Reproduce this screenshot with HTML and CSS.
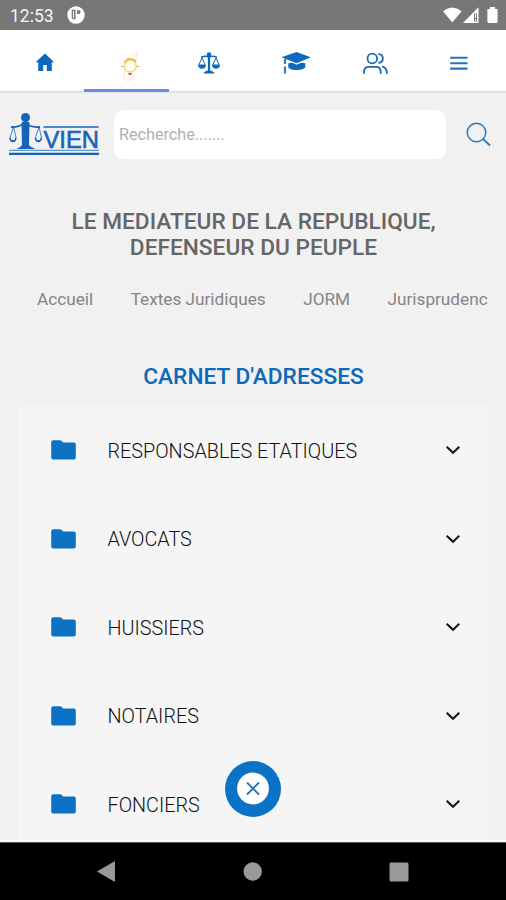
FILE: index.html
```html
<!DOCTYPE html>
<html lang="fr">
<head>
<meta charset="utf-8">
<meta name="viewport" content="width=device-width, initial-scale=1">
<title>Carnet d'adresses</title>
<link rel="stylesheet" href="styles.css">
</head>
<body>
<svg class="defs" width="0" height="0">
  <symbol id="folder" viewBox="0 0 25 20"><path d="M2.2.3h7.6L12.3 2.6h10.5q2 0 2 2v13q0 2-2 2H2.2q-2 0-2-2V2.3q0-2 2-2z" fill="#0b72c6"/></symbol>
  <symbol id="chevron" viewBox="0 0 16 10"><path d="M1.7 1.7 8 7.800l6.300-6.100" fill="none" stroke="#161616" stroke-width="2"/></symbol>
</svg>
<div class="screen">
  <header class="status">
    <span class="clock">12:53</span>
    <svg class="app-mark" width="18" height="18" viewBox="0 0 18 18"><circle cx="9" cy="9" r="8.700" fill="#fff"/><path d="M4.700 3.800h3.800v9.400H6.200Q4.700 13 4.700 11zM10 4.300h3.200q1.200 2.200-.8 3.800H10z" fill="#777"/><path d="M6.500 5.200v6.500" stroke="#fff" stroke-width="1"/></svg>
    <svg class="signals" width="56" height="18" viewBox="0 0 56 18">
      <path d="M0 5.200Q9.300-2.200 18.600 5.200L9.300 16.500z" fill="#fff"/>
      <path d="M35.500 1.200V17H20z" fill="#fff"/><path d="M31 7.500h3v8h-3z" fill="#777"/><path d="M32 8h1v4h-1zM32 13h1v2h-1z" fill="#fff"/>
      <path d="M47 1h5v2h2.600v12.500q0 1.500-1.500 1.500h-7.200q-1.500 0-1.500-1.500V3H47z" fill="#fff"/>
    </svg>
  </header>
  <nav class="tabs">
    <a class="tab"><svg viewBox="0 0 84 61"><path d="M45 23.500 54.300 32.300H51.800V41H46.800V35H43.200V41H38.200V32.300H35.500z" fill="#0b69be"/></svg></a>
    <a class="tab active"><svg viewBox="0 0 84 61">
      <circle cx="46.300" cy="36" r="6" fill="#fffdf0" stroke="#f5d983" stroke-width="1.500"/>
      <path d="M40.700 33q2-4.500 6-4 4 .2 5 3.500" fill="none" stroke="#edc04f" stroke-width="2.200"/>
      <path d="M37.300 36.500h2.300M52.500 36.500h2.600" stroke="#b8a56b" stroke-width="1"/>
      <path d="M44 43h4l-1 2h-2z" fill="#e34b28"/>
      <path d="M48.500 27q1-3 4.500-3.500l.8-1.500q-.5 5-2.500 8M41 41l-1.500 5.500 3 4 5-1 2.500-6" fill="none" stroke="#fbcabf" stroke-width="1" stroke-dasharray="2 1"/>
    </svg></a>
    <a class="tab"><svg viewBox="0 0 84 61"><g fill="none" stroke="#0b69be" stroke-width="1.500"><path d="M40 23v19" stroke-width="2.200"/><path d="M32 27.500q4-2 8-.5 4-1.500 8 .5"/><path d="m33 28-3.300 7h6.600zm14 0-3.300 7h6.600z" stroke-width="1"/></g><circle cx="40" cy="24.500" r="2.200" fill="#0b69be"/><path d="M29 35h8q-.5 3.800-4 3.800T29 35zm14 0h8q-.5 3.800-4 3.800T43 35zM34.500 43.500q.8-2.800 5.500-3.100 4.700.3 5.500 3.100z" fill="#0b69be"/></svg></a>
    <a class="tab"><svg viewBox="0 0 84 61"><path d="M28.400 27.200 43.500 22l14.300 5.200-14.300 6z" fill="#0b69be"/><path d="M35.200 33.500q3.500-1.700 8.300 1.200 5-2.800 8.800-1.500v4.300q-2.500 2.500-8.500 2.500t-8.500-2.600z" fill="#0b69be"/><path d="M32 29V34M32 36.500V43.500" stroke="#3d77b6" stroke-width="2.200"/></svg></a>
    <a class="tab"><svg viewBox="0 0 84 61"><g fill="none" stroke="#2266b2" stroke-width="1.800" stroke-linecap="round"><circle cx="35.300" cy="28.500" r="4.800"/><path d="M42 24.200q3.800.5 3.800 4.300T42 32.800M27.100 43v-1.500q0-4.700 4.700-4.700H39q4.700 0 4.700 4.700V43M45.600 36.600q4.300 1.200 4.300 6.400"/></g></svg></a>
    <a class="tab"><svg viewBox="0 0 84 61"><path d="M28.200 27.800h17.300M28.200 33.200h17.300M28.200 38.600h17.300" stroke="#2473bd" stroke-width="2.100"/></svg></a>
  </nav>
  <main class="content">
    <div class="search-row">
      <svg class="logo" width="91" height="44" viewBox="0 0 91 44">
        <g fill="none" stroke="#1764b7"><path d="M2 14Q8 15 15.500 10.200 24 15 31 14" stroke-width="1.800"/><path d="m4.500 14-3.400 10.500M4.500 14 7 24.500M30 14l-3.500 10.500M30 14l2.500 10.500" stroke-width=".8"/><path d="M34.500 14h55" stroke-width="1.500"/><path d="M0 37.400h90" stroke="#6496ca" stroke-width="1.400"/><path d="M0 40.900h90" stroke-width="2.200"/></g>
        <circle cx="16.500" cy="4.500" r="4.500" fill="#1764b7"/>
        <path d="M12.500 9.500q4-2.500 8 0l-.5 22.500q.5 1.500 6.500 4h-19q5-2.500 5.500-4zM.2 24.500h7.500q-.5 4.800-3.800 4.800T.2 24.500zm25.500 0h7.500q-.5 4.800-3.800 4.800T25.700 24.500z" fill="#1764b7"/>
        <path d="M1.700 24h4.500L5.600 27H2.300zm25.500 0h4.500l-.6 3h-3.300z" fill="#e7eff7"/>
        <text x="34.500" y="34.500" textLength="55.500" lengthAdjust="spacingAndGlyphs" class="logo-text">VIEN</text>
      </svg>
      <div class="search-box">Recherche.......</div>
      <svg class="search-icon" width="25" height="25" viewBox="0 0 25 25"><g fill="none" stroke="#287bbd" stroke-width="1.500"><circle cx="10.500" cy="10.500" r="9.300"/><path d="m17 17 7 6.500" stroke-width="1.800"/></g></svg>
    </div>
    <h1 class="headline">LE MEDIATEUR DE LA REPUBLIQUE,<br>DEFENSEUR DU PEUPLE</h1>
    <div class="links"><span>Accueil</span><span>Textes Juridiques</span><span>JORM</span><span>Jurisprudenc</span></div>
    <h2 class="section-title">CARNET D'ADRESSES</h2>
    <section class="list">
      <div class="row"><svg class="folder"><use href="#folder"/></svg><span>RESPONSABLES ETATIQUES</span><svg class="chevron"><use href="#chevron"/></svg></div>
      <div class="row"><svg class="folder"><use href="#folder"/></svg><span>AVOCATS</span><svg class="chevron"><use href="#chevron"/></svg></div>
      <div class="row"><svg class="folder"><use href="#folder"/></svg><span>HUISSIERS</span><svg class="chevron"><use href="#chevron"/></svg></div>
      <div class="row"><svg class="folder"><use href="#folder"/></svg><span>NOTAIRES</span><svg class="chevron"><use href="#chevron"/></svg></div>
      <div class="row"><svg class="folder"><use href="#folder"/></svg><span>FONCIERS</span><svg class="chevron"><use href="#chevron"/></svg></div>
    </section>
    <svg class="fab" viewBox="0 0 56 56"><circle cx="28" cy="28" r="28" fill="#0b72c6"/><circle cx="28" cy="27.500" r="15.900" fill="#fff"/><path d="m22 21.500 12 12m0-12-12 12" stroke="#2374b9" stroke-width="1.800"/></svg>
  </main>
  <footer class="navbar">
    <svg width="18" height="21" viewBox="0 0 18 21"><path d="M18 0v21L0 10.500z" fill="#999"/></svg>
    <svg width="20" height="19" viewBox="0 0 20 19"><circle cx="10.700" cy="9.500" r="9.200" fill="#999"/></svg>
    <svg width="20" height="20" viewBox="0 0 20 20"><rect x=".5" y=".5" width="19" height="19" rx="1.500" fill="#999"/></svg>
  </footer>
</div>
</body>
</html>
```
FILE: styles.css
```css
* { box-sizing: border-box; }
body { margin: 0; background: #f1f1f1; font-family: Roboto, sans-serif; }
svg { display: block; flex: none; }
.defs { position: absolute; }
.screen { width: 506px; height: 900px; display: flex; flex-direction: column; overflow: hidden; }
.status { height: 30px; flex: none; background: #777; display: flex; align-items: center; padding: 0 7px 0 10px; color: #f4f4f4; }
.clock { font-size: 17.5px; line-height: 20px; padding-top: 2px; width: 57px; }
.signals { margin-left: auto; }
.tabs { height: 62px; flex: none; display: grid; grid-template-columns: repeat(6, minmax(0, 1fr)); background: #fff; border-bottom: 1px solid #dedede; box-shadow: 0 1px 1px #e5e5e5; }
.tab { height: 62px; }
.tab svg { width: 84px; height: 61px; }
.tab.active { border-bottom: 3px solid #668bea; }
.content { flex: 1; min-height: 0; position: relative; overflow: hidden; border-bottom: 2px solid #fdfdfd; }
.search-row { display: flex; align-items: center; padding: 18px 15px 0 9px; height: 66px; }
.logo { margin-top: 1px; overflow: visible; }
.logo-text { font: 500 24px "Liberation Sans", sans-serif; fill: #1764b7; stroke: #1764b7; stroke-width: .6px; }
.search-box { margin-left: 14px; width: 333px; height: 49px; border-radius: 9px; background: #fff; color: #b0b0b0; font-size: 16.2px; line-height: 49px; padding-left: 5px; }
.search-icon { margin-left: 20px; margin-top: 1px; }
.headline { margin: 51px 0 0; padding-left: 1px; text-align: center; font-size: 22.7px; line-height: 26px; font-weight: 500; color: #666; white-space: nowrap; }
.links { display: flex; margin: 26px 18px 0 37px; color: #858585; font-size: 17.2px; line-height: 24px; gap: 37.5px; white-space: nowrap; }
.section-title { margin: 52px 0 0; padding-left: 1px; text-align: center; font-size: 22.7px; line-height: 28px; font-weight: 500; color: #1068b8; }
.list { margin: 14px 18px 0; background: #f5f5f5; border-radius: 6px 6px 0 0; padding-top: 1px; }
.row { height: 88.5px; display: flex; align-items: center; padding: 0 27px 0 32.5px; font-size: 19.8px; color: #111; }
.row span { margin-left: 32px; padding-top: 2px; font-weight: 300; }
.folder { width: 25px; height: 20px; }
.chevron { width: 16px; height: 10px; margin-left: auto; }
.fab { position: absolute; left: 225px; top: 669px; width: 56px; height: 56px; }
.navbar { height: 58px; flex: none; background: #000; display: flex; justify-content: space-between; align-items: center; padding: 0 97px; border-top: 1px solid #555; }
```
